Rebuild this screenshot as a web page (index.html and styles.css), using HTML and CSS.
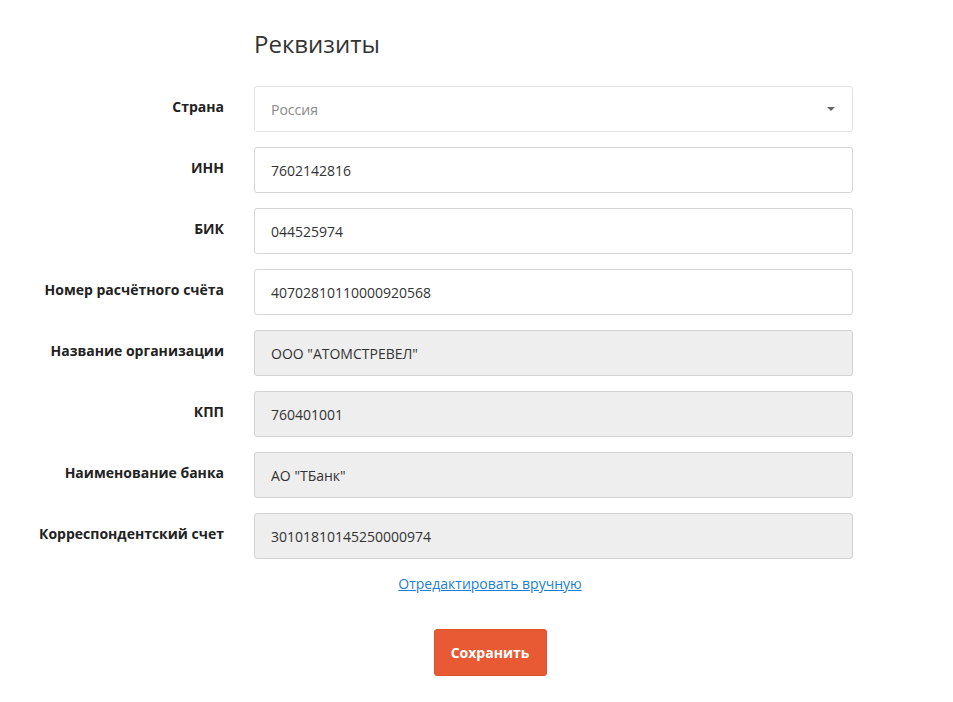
FILE: index.html
```html
<!DOCTYPE html>
<html lang="ru">
<head>
<meta charset="utf-8">
<link rel="stylesheet" href="styles.css">
</head>
<body>
<div class="page">
  <h1 class="title">Реквизиты</h1>
  <div class="form">
    <label class="label">Страна</label>
    <div class="field select"><span class="placeholder">Россия</span><span class="caret"></span></div>
    <label class="label">ИНН</label>
    <div class="field">7602142816</div>
    <label class="label">БИК</label>
    <div class="field">044525974</div>
    <label class="label">Номер расчётного счёта</label>
    <div class="field">40702810110000920568</div>
    <label class="label">Название организации</label>
    <div class="field disabled">ООО "АТОМСТРЕВЕЛ"</div>
    <label class="label">КПП</label>
    <div class="field disabled">760401001</div>
    <label class="label">Наименование банка</label>
    <div class="field disabled">АО "ТБанк"</div>
    <label class="label">Корреспондентский счет</label>
    <div class="field disabled">30101810145250000974</div>
  </div>
  <div class="link-row"><a class="link" href="#">Отредактировать вручную</a></div>
  <div class="btn-row"><button class="btn">Сохранить</button></div>
</div>
</body>
</html>
```
FILE: styles.css
```css
html, body { margin: 0; padding: 0; background: #fff; }
body { font-family: "Open Sans", "Liberation Sans", sans-serif; color: #333; font-size: 14px; }
.page { padding-top: 27px; width: 953px; }
.title { margin: 0 0 25px 254px; font-size: 24px; font-weight: 400; line-height: 34px; color: #333; }
.form { display: grid; grid-template-columns: 224px 599px; column-gap: 30px; row-gap: 15px; }
.label { text-align: right; font-weight: 700; font-size: 14px; line-height: 20px; padding-top: 11px; color: #222; }
.field { box-sizing: border-box; height: 46px; border: 1px solid #d6d6d6; border-radius: 3px; padding: 0 16px; display: flex; align-items: center; font-size: 14px; color: #333; background: #fff; }
.field.disabled { background: #eee; border-color: #d2d2d2; }
.select { justify-content: space-between; border-color: #e2e2e2; }
.placeholder { color: #888; }
.caret { width: 0; height: 0; border-left: 4px solid transparent; border-right: 4px solid transparent; border-top: 4px solid #666; margin-right: 1px; }
.link-row { box-sizing: border-box; padding-left: 27px; text-align: center; padding-top: 15px; line-height: 20px; }
.link { color: #1a7fd4; text-decoration: underline; font-size: 14px; }
.btn-row { box-sizing: border-box; padding-left: 27px; display: flex; justify-content: center; padding-top: 35px; }
.btn { box-sizing: border-box; width: 113px; height: 47px; background: #e85a33; color: #fff; border: 1px solid #d9522d; border-radius: 3px; font-family: "Open Sans", "Liberation Sans", sans-serif; font-weight: 700; font-size: 14px; }
```
